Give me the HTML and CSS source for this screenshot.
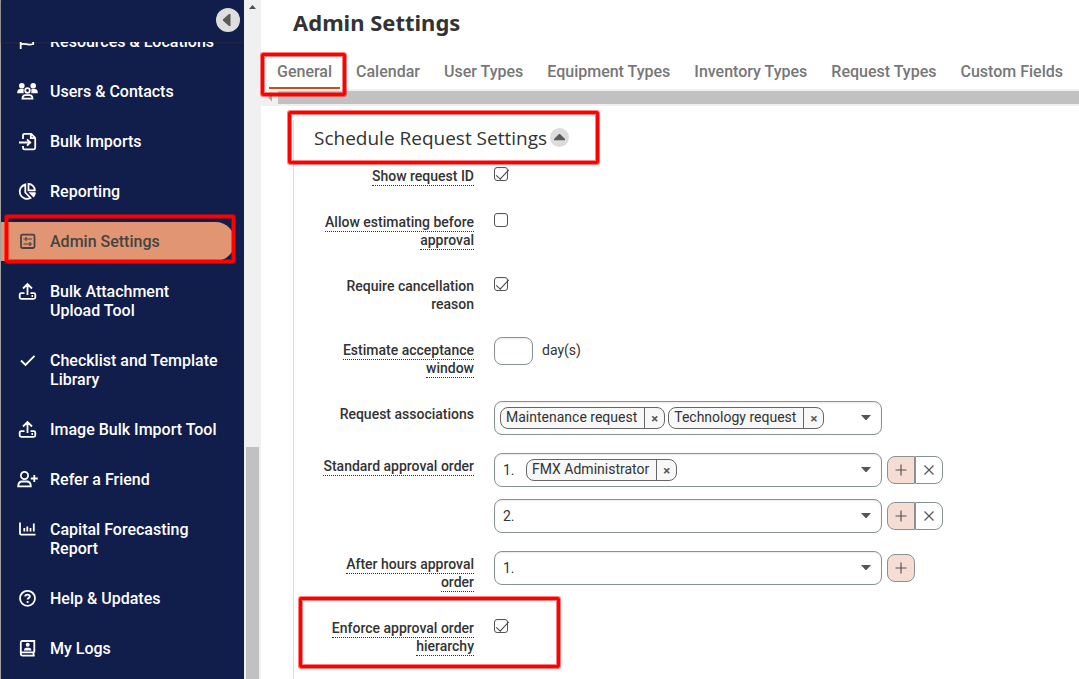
FILE: index.html
```html
<!DOCTYPE html>
<html lang="en">
<head>
  <meta charset="UTF-8" />
  <meta name="viewport" content="width=device-width, initial-scale=1.0" />
  <title>Admin Settings</title>
  <link rel="stylesheet" href="styles.css">
</head>
<body>
  <aside class="sidebar">
    <div class="sidebar-header">
      <button class="collapse" aria-label="Collapse menu">
        <svg width="24" height="24" viewBox="0 0 24 24"><path d="M14.5 6v12h-1.5l-6-5.200v-1.600l6-5.200z" fill="#5a5a5a"/></svg>
      </button>
    </div>
    <div class="nav-scroll">
      <nav class="nav">
        <a class="nav-item" href="#">
          <svg class="icon" viewBox="0 0 21 19"><path d="M3.700 2v15M3.700 12.500c4-2 6 1.500 12.500-.5V3c-6 2-8-1.500-12.500 .5"/></svg>
          <span>Resources &amp; Locations</span>
        </a>
        <a class="nav-item" href="#">
          <svg class="icon" viewBox="0 0 21 19"><g class="solid"><circle cx="4.800" cy="3.800" r="2.800"/><circle cx="16.200" cy="3.800" r="2.800"/><path d="M.2 11.200c0-3 1-4.200 3-4.200h2.800l1 .8c-.6 1-.6 2.200-.2 3.400zM20.800 11.200c0-3-1-4.200-3-4.200H15l-1 .8c.6 1 .6 2.200 .2 3.400z"/></g><circle cx="10.500" cy="8.500" r="2.300"/><path d="M5.500 16.700c0-2.500 1.200-3.600 3-3.600h4c1.800 0 3 1.100 3 3.600z"/></svg>
          <span>Users &amp; Contacts</span>
        </a>
        <a class="nav-item" href="#">
          <svg class="icon" viewBox="0 0 21 19"><path d="M6 7V3.200C6 2.200 6.600 1.800 7.500 1.800h6.700l4 4v10c0 1-.5 1.500-1.500 1.500H7.500c-1 0-1.500-.5-1.500-1.500V14M2 10.500h11M10 7.300l3.300 3.200-3.300 3.200M13.800 2v4.200H18"/></svg>
          <span>Bulk Imports</span>
        </a>
        <a class="nav-item" href="#">
          <svg class="icon" viewBox="0 0 21 19"><path d="M8.300 2.500A7.300 7.300 0 1 0 13.500 16L8.300 10.500zM11.500 1.800v6.500h6.300a6.500 6.500 0 0 0-6.300-6.500z"/><path class="solid" d="M11.500 10.300h7.300c0 2.200-.8 4-2.300 5.200z"/></svg>
          <span>Reporting</span>
        </a>
        <a class="nav-item active" href="#">
          <svg class="icon" viewBox="0 0 21 19"><rect x="4" y="2.700" width="13.500" height="13.300" rx="1.500"/><path stroke-width="1.200" d="M6.500 7h8.500M6.500 12h8.500M9 5v4M13 10v4"/></svg>
          <span>Admin Settings</span>
          <span class="mark mark-nav"></span>
        </a>
        <a class="nav-item" href="#">
          <svg class="icon" viewBox="0 0 21 19"><path d="M10.500 13V2.500M6 6.500l4.500-4.500L15 6.500M7.500 11.200H4.200c-1 0-1.500.6-1.500 1.500v2.600c0 1 .5 1.500 1.500 1.500h12.600c1 0 1.500-.5 1.500-1.500v-2.600c0-.9-.5-1.500-1.500-1.500h-3.300M14.500 14h1.500"/></svg>
          <span>Bulk Attachment Upload Tool</span>
        </a>
        <a class="nav-item" href="#">
          <svg class="icon" viewBox="0 0 21 19"><path stroke-width="1.900" d="M4 9.500l4.500 4.500L17.500 4.800"/></svg>
          <span>Checklist and Template Library</span>
        </a>
        <a class="nav-item" href="#">
          <svg class="icon" viewBox="0 0 21 19"><path d="M10.500 13V2.500M6 6.500l4.500-4.500L15 6.500M7.500 11.200H4.200c-1 0-1.500.6-1.500 1.500v2.600c0 1 .5 1.500 1.500 1.500h12.600c1 0 1.500-.5 1.500-1.500v-2.600c0-.9-.5-1.500-1.500-1.500h-3.300M14.500 14h1.500"/></svg>
          <span>Image Bulk Import Tool</span>
        </a>
        <a class="nav-item" href="#">
          <svg class="icon" viewBox="0 0 21 19"><circle cx="7.500" cy="5.500" r="3.600"/><path d="M1.200 16.300c0-3.400 1.600-4.800 4-4.800h4.600c2.400 0 4 1.400 4 4.800zM17.300 5v7M13.800 8.500h7"/></svg>
          <span>Refer a Friend</span>
        </a>
        <a class="nav-item" href="#">
          <svg class="icon" viewBox="0 0 21 19"><path d="M3 2.500v11c0 .8.500 1.200 1.200 1.200h14.300M7.300 8v3.500M10.300 6.500v5M13.500 8v3.500M16.800 3.500v8"/></svg>
          <span>Capital Forecasting Report</span>
        </a>
        <a class="nav-item" href="#">
          <svg class="icon" viewBox="0 0 21 19"><circle cx="10.500" cy="9.300" r="7.500"/><path stroke-width="1.900" d="M8.200 7.600c0-1.500 1-2 2.200-2 1.400 0 2.400.7 2.400 1.900 0 1.500-2.200 1.500-2.200 3"/><circle class="solid" cx="10.600" cy="13" r="1.100"/></svg>
          <span>Help &amp; Updates</span>
        </a>
        <a class="nav-item" href="#">
          <svg class="icon" viewBox="0 0 21 19"><path d="M17.300 13.500V2H5.200c-.9 0-1.400.5-1.400 1.400v11.700c0 1 .5 1.500 1.400 1.500h12.500M3.800 14.200c.4-.6.800-.8 1.400-.8h12.100M16.500 13.500v3"/><g class="solid"><circle cx="10.700" cy="5.800" r="2"/><path d="M7 11.600c0-2 .9-2.900 2.300-2.900h2.800c1.400 0 2.300.9 2.300 2.900z"/></g></svg>
          <span>My Logs</span>
        </a>
      </nav>
    </div>
  </aside>

  <div class="scrollbar">
    <svg width="17" height="17" viewBox="0 0 17 17"><path d="M8.500 5l3.500 4H5z" fill="#505050"/></svg>
    <div class="scrollbar-thumb"></div>
  </div>

  <main class="main">
    <h1 class="page-title">Admin Settings</h1>
    <nav class="tabs">
      <a class="tab selected" href="#">General<span class="mark mark-tab"></span></a>
      <a class="tab" href="#">Calendar</a>
      <a class="tab" href="#">User Types</a>
      <a class="tab" href="#">Equipment Types</a>
      <a class="tab" href="#">Inventory Types</a>
      <a class="tab" href="#">Request Types</a>
      <a class="tab" href="#">Custom Fields</a>
    </nav>
    <div class="tabs-scrollbar">
      <svg width="17" height="17" viewBox="0 0 17 17"><path d="M7 8.500l4-4v8z" fill="#a3a3a3"/></svg>
      <div class="tabs-thumb"></div>
    </div>

    <section class="settings">
      <h2 class="section-title">
        Schedule Request Settings
        <button class="toggle" aria-label="Collapse section">
          <svg width="19" height="19" viewBox="0 0 19 19"><path d="M9 6h1l5 5v1.200H4V11z" fill="#5a5a5a"/></svg>
        </button>
        <span class="mark mark-title"></span>
      </h2>

      <div class="row">
        <label class="row-label" for="showId"><span class="hint">Show request ID</span></label>
        <div class="row-field"><input type="checkbox" class="check" id="showId" checked></div>
      </div>
      <div class="row">
        <label class="row-label" for="allowEst"><span class="hint">Allow estimating before approval</span></label>
        <div class="row-field"><input type="checkbox" class="check" id="allowEst"></div>
      </div>
      <div class="row">
        <label class="row-label" for="cancelReason">Require cancellation reason</label>
        <div class="row-field"><input type="checkbox" class="check" id="cancelReason" checked></div>
      </div>
      <div class="row">
        <label class="row-label" for="window"><span class="hint">Estimate acceptance window</span></label>
        <div class="row-field">
          <div class="line"><input type="text" class="days" id="window"><span class="unit">day(s)</span></div>
        </div>
      </div>
      <div class="row">
        <label class="row-label" for="assoc">Request associations</label>
        <div class="row-field">
          <div class="line">
            <div class="picker">
              <span class="chip"><span class="chip-text">Maintenance request</span><button class="chip-x" aria-label="Remove">×</button></span>
              <span class="chip"><span class="chip-text">Technology request</span><button class="chip-x" aria-label="Remove">×</button></span>
              <select class="picker-select" id="assoc"><option></option></select>
              <svg class="caret" viewBox="0 0 10 6"><path d="M0 0h10L5.500 5h-1z"/></svg>
            </div>
          </div>
        </div>
      </div>
      <div class="row">
        <label class="row-label" for="std1"><span class="hint">Standard approval order</span></label>
        <div class="row-field">
          <div class="line">
            <div class="picker">
              <span class="num">1.</span>
              <span class="chip"><span class="chip-text">FMX Administrator</span><button class="chip-x" aria-label="Remove">×</button></span>
              <select class="picker-select" id="std1"><option></option></select>
              <svg class="caret" viewBox="0 0 10 6"><path d="M0 0h10L5.500 5h-1z"/></svg>
            </div>
            <div class="btn-group">
              <button class="btn add" aria-label="Add step"><svg viewBox="0 0 12 12"><path d="M6 .5v11M.5 6h11"/></svg></button>
              <button class="btn" aria-label="Remove step"><svg viewBox="0 0 12 12"><path d="M1.500 1.500l9 9M10.500 1.500l-9 9"/></svg></button>
            </div>
          </div>
          <div class="line">
            <div class="picker">
              <span class="num">2.</span>
              <select class="picker-select" aria-label="Second approver"><option></option></select>
              <svg class="caret" viewBox="0 0 10 6"><path d="M0 0h10L5.500 5h-1z"/></svg>
            </div>
            <div class="btn-group">
              <button class="btn add" aria-label="Add step"><svg viewBox="0 0 12 12"><path d="M6 .5v11M.5 6h11"/></svg></button>
              <button class="btn" aria-label="Remove step"><svg viewBox="0 0 12 12"><path d="M1.500 1.500l9 9M10.500 1.500l-9 9"/></svg></button>
            </div>
          </div>
        </div>
      </div>
      <div class="row">
        <label class="row-label" for="after1"><span class="hint">After hours approval order</span></label>
        <div class="row-field">
          <div class="line">
            <div class="picker">
              <span class="num">1.</span>
              <select class="picker-select" id="after1"><option></option></select>
              <svg class="caret" viewBox="0 0 10 6"><path d="M0 0h10L5.500 5h-1z"/></svg>
            </div>
            <div class="btn-group">
              <button class="btn add" aria-label="Add step"><svg viewBox="0 0 12 12"><path d="M6 .5v11M.5 6h11"/></svg></button>
            </div>
          </div>
        </div>
      </div>
      <div class="row">
        <label class="row-label" for="enforce"><span class="hint">Enforce approval order hierarchy</span></label>
        <div class="row-field"><input type="checkbox" class="check" id="enforce" checked></div>
        <span class="mark mark-row"></span>
      </div>
    </section>
  </main>
</body>
</html>
```
FILE: styles.css
```css
* { box-sizing: border-box; }
body { margin: 0; height: 100vh; display: flex; overflow: hidden; background: #fff; color: #333; font-family: Roboto, "Liberation Sans", sans-serif; font-size: 14px; }
button { padding: 0; border: none; cursor: pointer; font-family: inherit; }
a { text-decoration: none; }
svg { display: block; flex: none; }

/* sidebar */
.sidebar { width: 244px; flex: none; display: flex; flex-direction: column; background: #111d4a; border-left: 1px solid #a0a0a0; }
.sidebar-header { height: 42px; flex: none; display: flex; justify-content: flex-end; align-items: flex-start; padding: 8px 4px 0 0; box-shadow: 0 1px 2px rgba(60,50,70,0.5); }
.collapse { width: 24px; height: 24px; border-radius: 50%; background: #dedede; }
.nav-scroll { flex: 1; min-height: 0; overflow: hidden; }
.nav { display: flex; flex-direction: column; gap: 11px; margin-top: -20px; padding-right: 9px; }
.nav-item { position: relative; display: flex; gap: 12px; padding: 10px 12px 10px 16px; color: #fff; font-size: 16px; font-weight: 500; line-height: 19px; border-radius: 0 20px 20px 0; }
.nav-item.active { background: #e29572; color: #444; }
.icon { width: 21px; height: 19px; fill: none; stroke: currentColor; stroke-width: 1.8; }
.icon .solid { fill: currentColor; stroke: none; }

/* page scrollbar */
.scrollbar { width: 17px; flex: none; background: #f0f0f0; display: flex; flex-direction: column; }
.scrollbar-thumb { flex: 1; margin: 430px 2px 0; background: #c1c1c1; }

/* main */
.main { flex: 1; min-width: 0; }
.page-title { margin: 0; padding: 6px 0 0 32px; font-family: "Noto Sans", sans-serif; font-size: 22px; font-weight: 700; line-height: 32px; }
.tabs { display: flex; gap: 8px; padding: 16px 0 0 8px; white-space: nowrap; }
.tab { position: relative; padding: 8px 8px 6px; border-bottom: 2px solid transparent; color: #777; font-size: 16px; font-weight: 500; line-height: 19px; }
.tab.selected { border-color: #c8501e; }
.tabs-scrollbar { height: 17px; display: flex; background: #f0f0f0; }
.tabs-thumb { flex: 1; margin: 2px 0; background: #c1c1c1; }

.settings { margin: 14px 16px 0 32px; padding: 0 0 20px 20px; border-left: 1px solid #ddd; }
.section-title { position: relative; display: flex; align-items: center; gap: 3px; margin: 0; height: 43px; padding-bottom: 8px; font-family: "Open Sans", sans-serif; font-size: 19px; font-weight: 400; }
.toggle { width: 19px; height: 19px; border-radius: 50%; background: #dcdcdc; }
.row { position: relative; display: grid; grid-template-columns: 160px 1fr; column-gap: 20px; margin-bottom: 18px; }
.row-label { padding: 4px 0 6px; text-align: right; font-weight: 500; line-height: 18px; }
.hint { padding-bottom: 1px; border-bottom: 1px dotted #333; }
.row-field { display: flex; flex-direction: column; gap: 12px; }
.line { display: flex; align-items: center; }

.check { appearance: none; position: relative; width: 14px; height: 14px; margin: 4px 0 0; border: 1px solid #555; border-radius: 3px; background: #fff; box-shadow: inset 0 1px 2px #eee; }
.check:checked::before { content: ""; position: absolute; left: 1px; top: 2px; width: 12px; height: 5px; border-left: 1px solid #444; border-bottom: 1px solid #444; transform: rotate(-47deg); }
.days { width: 39px; height: 28px; padding: 0 6px; border: 1px solid #889290; border-radius: 8px; box-shadow: inset 0 1px 2px #efe8e6; }
.unit { margin-left: 9px; padding-bottom: 2px; }

.picker { flex: 0 1 388px; min-width: 0; height: 34px; display: flex; align-items: center; gap: 3px; padding: 0 10px 0 5px; border: 1px solid #889290; border-radius: 8px; box-shadow: inset 0 1px 2px #efe8e6; }
.picker-select { flex: 1; min-width: 0; height: 28px; appearance: none; border: none; background: none; }
.caret { width: 10px; height: 6px; fill: #555; }
.num { width: 23px; padding: 0 0 1px 3px; }
.chip { display: flex; height: 22px; border: 1px solid #666; border-radius: 8px; background: #f8f8f8; line-height: 18px; white-space: nowrap; }
.chip-text { padding: 0 7px 0 5px; }
.chip-x { width: 20px; border-left: 1px solid #666; background: none; color: #555; font-size: 13px; font-weight: 700; }
.btn-group { display: flex; margin-left: 5px; }
.btn { width: 28px; height: 28px; display: flex; align-items: center; justify-content: center; border: 1px solid #889290; border-radius: 8px; background: #fff; }
.btn.add { background: #f6ddd3; }
.btn:first-child:not(:last-child) { border-radius: 8px 0 0 8px; }
.btn:last-child:not(:first-child) { border-radius: 0 8px 8px 0; }
.btn svg { width: 12px; height: 12px; fill: none; stroke: #555; stroke-width: 1.2; }

/* red highlight frames */
.mark { position: absolute; border: 3px solid #f00; border-radius: 2px; box-shadow: 0 0 0 1px rgba(255,0,0,0.5), inset 0 0 0 1px rgba(255,0,0,0.5); pointer-events: none; z-index: 2; }
.mark-nav { inset: -7px 0 -2px 4px; }
.mark-tab { inset: -1px -6px -9px -8px; }
.mark-title { left: -26px; top: -9px; width: 311px; height: 53px; }
.mark-row { left: -15px; top: -18px; width: 261px; height: 71px; }
```
